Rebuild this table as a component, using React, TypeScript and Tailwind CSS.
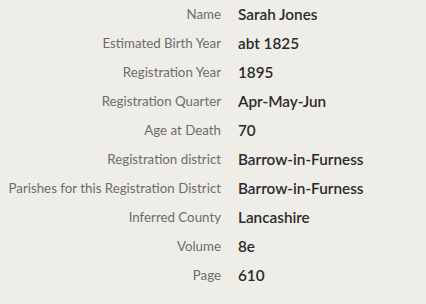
const rows: [string, string][] = [
    ['Name', 'Sarah Jones'],
    ['Estimated Birth Year', 'abt 1825'],
    ['Registration Year', '1895'],
    ['Registration Quarter', 'Apr-May-Jun'],
    ['Age at Death', '70'],
    ['Registration district', 'Barrow-in-Furness'],
    ['Parishes for this Registration District', 'Barrow-in-Furness'],
    ['Inferred County', 'Lancashire'],
    ['Volume', '8e'],
    ['Page', '610'],
];

const App = () => {
    return (
        <div className="h-[304px] w-[426px] bg-[#efede8] font-['Lato',sans-serif]">
            <dl className="grid grid-cols-[221px_1fr] gap-x-[17px]">
                {rows.map(([label, value]) => (
                    <div key={label} className="contents">
                        <dt className="flex h-[29px] items-center justify-end text-[13.3px] text-[#6c6c6c]">{label}</dt>
                        <dd className="flex h-[29px] items-center text-[15.3px] font-semibold text-[#2b2b2b]">{value}</dd>
                    </div>
                ))}
            </dl>
        </div>
    );
};

export default App;
